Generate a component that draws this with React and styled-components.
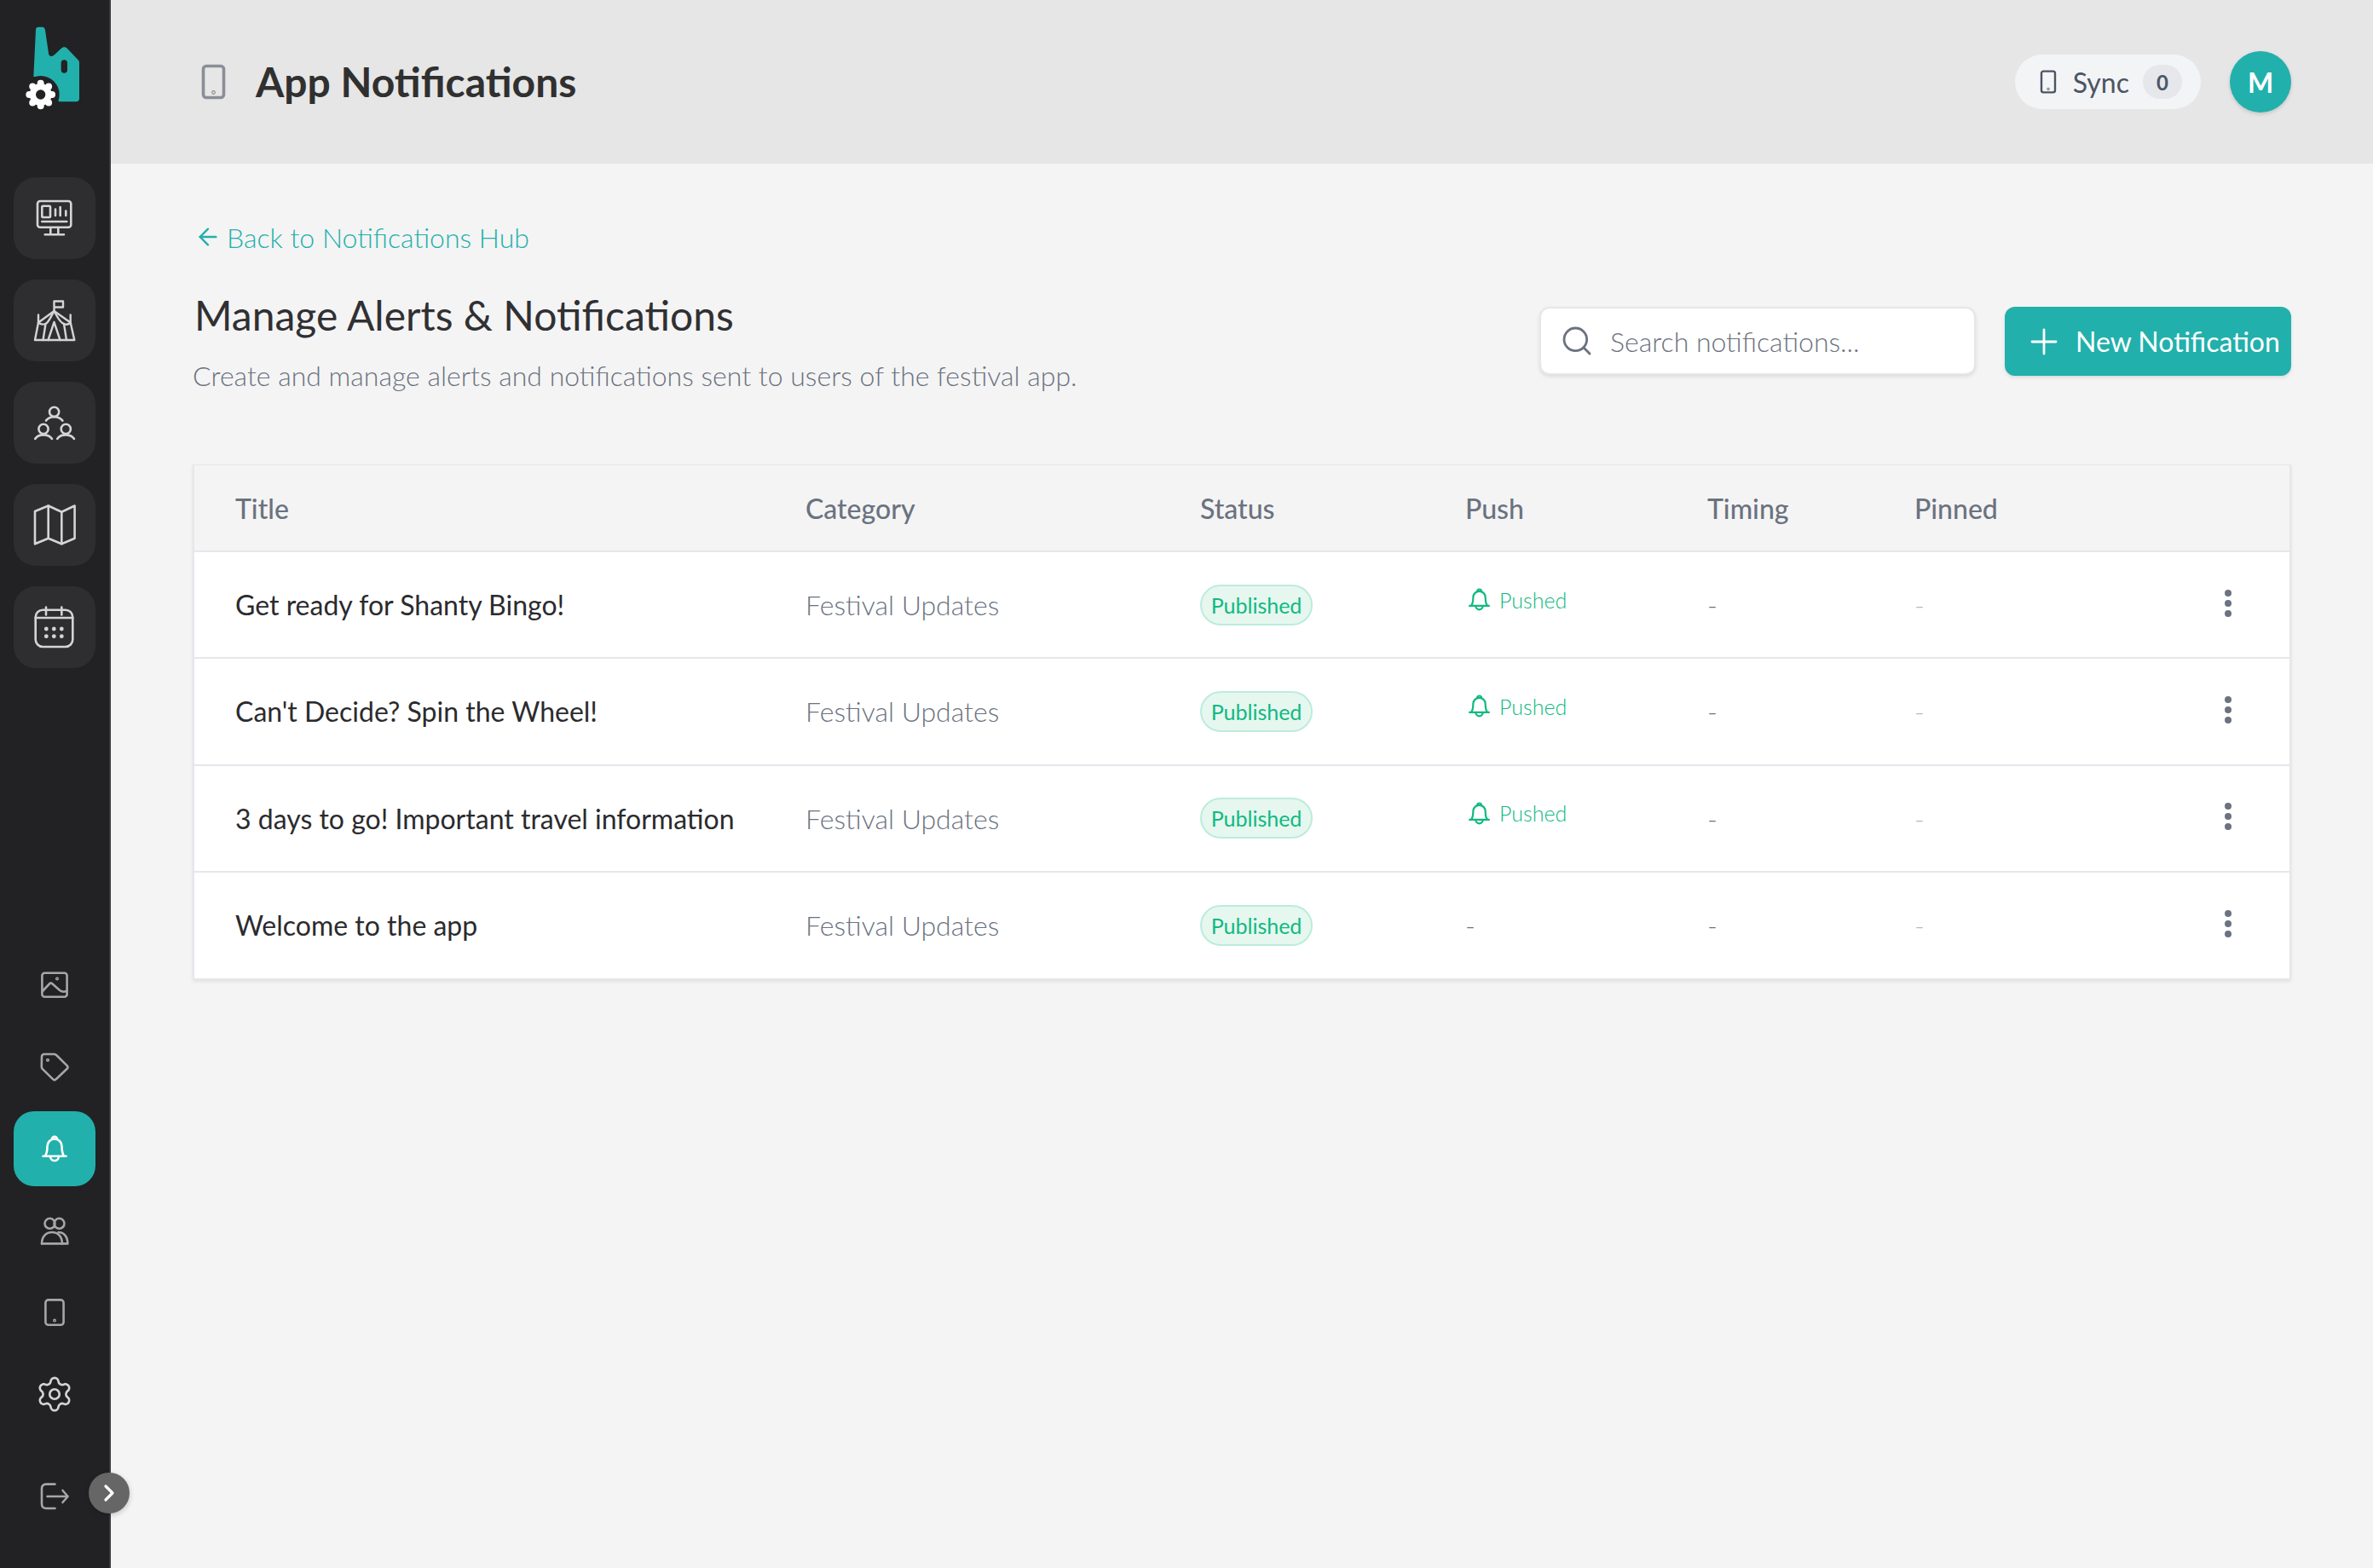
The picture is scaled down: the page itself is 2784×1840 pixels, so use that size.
import React from "react";
import styled, { createGlobalStyle } from "styled-components";
import { ArrowLeft, ChevronRight, Plus, Search, Settings } from "lucide-react";

const TEAL = "#22b0ac";
const GREEN = "#10b981";
const ROW_COLUMNS = "669px 463px 311px 284px 243px 1fr 96px";

const GlobalStyle = createGlobalStyle`
  html, body {
    margin: 0;
    padding: 0;
    background: #f4f4f4;
  }
  * {
    box-sizing: border-box;
  }
  body {
    font-family: Lato, "Open Sans", sans-serif;
  }
`;

const Shell = styled.div`
  position: relative;
  display: flex;
  width: 2784px;
  height: 1840px;
  overflow: hidden;
`;

const Sidebar = styled.aside`
  position: relative;
  flex: 0 0 130px;
  display: flex;
  flex-direction: column;
  padding: 20px 16px 40px;
  background: #222224;
  border-right: 2px solid #38383c;
`;

const LogoBox = styled.div`
  margin: 0 0 68px 4px;
  height: 120px;
`;

const TopNav = styled.nav`
  display: flex;
  flex-direction: column;
  gap: 24px;
`;

const TopItem = styled.div`
  display: flex;
  align-items: center;
  justify-content: center;
  width: 96px;
  height: 96px;
  border-radius: 26px;
  background: #2e2e30;
  color: #d4d4d4;
`;

const BottomNav = styled.nav`
  margin-top: auto;
  display: flex;
  flex-direction: column;
  gap: 8px;
`;

const BottomItem = styled.div`
  display: flex;
  align-items: center;
  justify-content: center;
  width: 96px;
  height: 88px;
  border-radius: 24px;
  background: ${(p) => (p.$active ? TEAL : "transparent")};
  color: ${(p) => (p.$active ? "#ffffff" : p.$bright ? "#d4d4d4" : "#a6a6a6")};
`;

const LogoutItem = styled(BottomItem)`
  margin-top: 24px;
`;

const ExpandButton = styled.div`
  position: absolute;
  left: 104px;
  top: 1728px;
  display: flex;
  align-items: center;
  justify-content: center;
  width: 48px;
  height: 48px;
  border-radius: 50%;
  background: #666666;
  color: #ffffff;
  box-shadow: 0 2px 6px rgba(0, 0, 0, 0.2);
`;

const Main = styled.main`
  flex: 1;
  display: flex;
  flex-direction: column;
  min-width: 0;
`;

const TopBar = styled.header`
  flex: 0 0 192px;
  display: flex;
  align-items: center;
  justify-content: space-between;
  padding: 0 96px 0 98px;
  background: #e6e6e6;
`;

const TopBarTitle = styled.div`
  display: flex;
  align-items: center;
  gap: 24px;
  color: #8b8e98;
`;

const PageName = styled.h1`
  margin: 0;
  font-size: 48px;
  line-height: 60px;
  font-weight: 700;
  color: #303030;
`;

const TopBarRight = styled.div`
  display: flex;
  align-items: center;
  gap: 34px;
`;

const SyncPill = styled.div`
  display: flex;
  align-items: center;
  height: 64px;
  padding: 0 22px 0 24px;
  border-radius: 32px;
  background: #f3f4f6;
  color: #4b5563;
  font-size: 32px;
`;

const SyncLabel = styled.span`
  margin: 0 16px 0 12px;
`;

const SyncCount = styled.span`
  display: flex;
  align-items: center;
  justify-content: center;
  width: 46px;
  height: 40px;
  border-radius: 20px;
  background: #e5e7eb;
  font-size: 24px;
  font-weight: 700;
`;

const Avatar = styled.div`
  display: flex;
  align-items: center;
  justify-content: center;
  width: 72px;
  height: 72px;
  border-radius: 50%;
  background: ${TEAL};
  color: #ffffff;
  font-size: 32px;
  font-weight: 700;
  box-shadow: 0 2px 4px rgba(0, 0, 0, 0.15);
`;

const Content = styled.div`
  padding: 64px 96px 0 98px;
`;

const BackLink = styled.a`
  display: flex;
  align-items: center;
  gap: 6px;
  height: 44px;
  color: ${TEAL};
  font-size: 32px;
  font-weight: 300;
`;

const HeadingRow = styled.div`
  display: flex;
  justify-content: space-between;
  align-items: flex-start;
  margin-top: 40px;
`;

const PageHeading = styled.h2`
  margin: 0;
  font-size: 48px;
  line-height: 60px;
  font-weight: 400;
  color: #303033;
`;

const PageIntro = styled.p`
  margin: 19px 0 0 -2px;
  font-size: 32px;
  line-height: 44px;
  font-weight: 300;
  color: #6b7280;
`;

const Toolbar = styled.div`
  display: flex;
  gap: 34px;
  margin-top: 20px;
`;

const SearchBox = styled.label`
  display: flex;
  align-items: center;
  gap: 17px;
  width: 512px;
  height: 80px;
  padding: 0 22px;
  background: #ffffff;
  border: 2px solid #e5e7eb;
  border-radius: 12px;
  color: #6b7280;
  box-shadow: 0 2px 4px rgba(0, 0, 0, 0.1);
`;

const SearchInput = styled.input`
  flex: 1;
  min-width: 0;
  border: 0;
  outline: 0;
  background: transparent;
  font-family: inherit;
  font-size: 32px;
  font-weight: 300;

  &::placeholder {
    color: #6b7280;
    opacity: 1;
  }
`;

const NewButton = styled.button`
  display: flex;
  align-items: center;
  gap: 13px;
  width: 336px;
  height: 81px;
  padding: 0 0 0 22px;
  border: 0;
  border-radius: 12px;
  background: ${TEAL};
  color: #ffffff;
  font-family: inherit;
  font-size: 32px;
  font-weight: 400;
  box-shadow: 0 2px 4px rgba(0, 0, 0, 0.1);
`;

const TableCard = styled.section`
  margin: 82px 0 0 -2px;
  border: 2px solid #e5e7eb;
  border-top-width: 1px;
  background: #ffffff;
  box-shadow: 0 2px 4px rgba(0, 0, 0, 0.08);
`;

const HeaderRow = styled.div`
  display: grid;
  grid-template-columns: ${ROW_COLUMNS};
  align-items: center;
  height: 102px;
  background: #f4f4f4;
  border-bottom: 2px solid #e5e7eb;
`;

const HeaderCell = styled.div`
  padding-left: 48px;
  font-size: 32px;
  font-weight: 500;
  color: #6b7280;
`;

const Row = styled.div`
  display: grid;
  grid-template-columns: ${ROW_COLUMNS};
  align-items: center;
  height: 125.33px;
  border-bottom: 2px solid #e5e7eb;

  &:last-child {
    border-bottom: 0;
    height: 124px;
  }
`;

const TitleCell = styled.div`
  padding-left: 48px;
  font-size: 32px;
  font-weight: 400;
  color: #2b2b2e;
`;

const CategoryCell = styled.div`
  padding-left: 48px;
  font-size: 32px;
  font-weight: 300;
  color: #6b7280;
`;

const StatusCell = styled.div`
  padding-left: 48px;
`;

const StatusBadge = styled.span`
  display: inline-flex;
  align-items: center;
  justify-content: center;
  width: 132px;
  height: 48px;
  border: 2px solid #bcecdc;
  border-radius: 24px;
  background: #e6f7f0;
  color: ${GREEN};
  font-size: 25px;
`;

const PushCell = styled.div`
  display: flex;
  align-items: center;
  gap: 10px;
  margin-top: -12px;
  padding-left: 51px;
  color: ${GREEN};
  font-size: 25px;
  font-weight: 300;
`;

const DashCell = styled.div`
  padding-left: ${(p) => p.$inset || 48}px;
  font-size: 32px;
  font-weight: 300;
  color: ${(p) => (p.$faint ? "#b9b9b9" : "#6b7280")};
`;

const ActionCell = styled.div`
  display: flex;
  flex-direction: column;
  align-items: flex-start;
  gap: 4px;
  margin-top: -4px;
  padding-left: 20px;
`;

const Dot = styled.span`
  width: 8px;
  height: 8px;
  border-radius: 50%;
  background: #6b7280;
`;

const BellGlyph = ({ size = 32 }) => (
  <svg width={size} height={size} viewBox="0 0 32 32" fill="none" stroke="currentColor" strokeWidth="2.6" strokeLinecap="round" strokeLinejoin="round" style={{ overflow: "visible" }}>
    <path d="M2.5 24.8H29.5" />
    <path d="M5 24.5C7 21.5 7.5 18.5 7.5 13A8.5 8.5 0 0 1 24.5 13C24.5 18.5 25 21.5 27 24.5" />
    <path d="M13 4.8A3 3 0 0 1 19 4.8" />
    <path d="M11 25A5 5 0 0 0 21 25" />
  </svg>
);

const Logo = () => (
  <svg width="90" height="120" viewBox="0 0 270 360">
    <path
      fill={TEAL}
      d="M76 35H88C95 35 98 40 99 46L111 128C113 140 122 140 130 134L155 111C162 104 170 104 177 111L214 150C217 153 219 156 219 160V288C219 294 214 298 208 298H152C147 298 144 295 144 290C144 262 134 218 100 213L58 210L66 44C66 38 70 35 76 35Z"
    />
    <rect x="155" y="151" width="22" height="46" rx="11" fill="#222224" />
    <circle cx="83" cy="273" r="66" fill="#222224" />
    <g fill="#ffffff">
      <circle cx="83" cy="273" r="39" />
      {[0, 45, 90, 135, 180, 225, 270, 315].map((a) => (
        <circle key={a} cx={83 + 40 * Math.cos((a * Math.PI) / 180)} cy={273 + 40 * Math.sin((a * Math.PI) / 180)} r="12" />
      ))}
    </g>
    <circle cx="83" cy="273" r="17" fill="#222224" />
  </svg>
);

const strokeProps = {
  fill: "none",
  stroke: "currentColor",
  strokeLinecap: "round",
  strokeLinejoin: "round",
  style: { overflow: "visible" },
};

const MonitorIcon = () => (
  <svg width="48" height="48" viewBox="0 0 48 48" strokeWidth="2.6" {...strokeProps}>
    <rect x="4" y="4" width="39.3" height="30.7" rx="3" />
    <rect x="9.3" y="9.7" width="9.7" height="13.3" rx="1" />
    <path d="M25 13.5V21M30.7 11V21M37.3 15.5V21M9.3 28H38.3M19.3 35V43M28.3 35V43M12.7 43.3H35" />
  </svg>
);

const TentIcon = () => (
  <svg width="48" height="48" viewBox="0 0 48 48" strokeWidth="2.4" {...strokeProps}>
    <path d="M23.5 13V1.5H34V8.5H23.5" />
    <path d="M5 17.5V26.5L23.5 13L42.7 26.5V17.5" />
    <path d="M5 26.5L1 47H47.3L42.7 26.5" />
    <path d="M5 26.5C8 29 11 29 13.5 28C17 26.5 20 19 23.5 13C27 19 30 26.5 35 28C37 29 40 29 42.7 26.5" />
    <path d="M13.5 28L10.5 47M35 28L38 47M23.5 26L16.5 47M23.5 26L30.5 47" />
  </svg>
);

const PeopleIcon = () => (
  <svg width="48" height="48" viewBox="0 0 48 48" strokeWidth="2.6" {...strokeProps}>
    <circle cx="23.6" cy="11.3" r="5.6" />
    <path d="M14 21.6C18 15.8 29 15.8 33.4 21.6" />
    <circle cx="11" cy="31.4" r="5.6" />
    <path d="M1.2 43C5 36.8 17 36.8 21 43" />
    <circle cx="37.3" cy="31.4" r="5.6" />
    <path d="M27.2 43C31 36.8 43 36.8 47 43" />
  </svg>
);

const MapIcon = () => (
  <svg width="48" height="48" viewBox="0 0 48 48" strokeWidth="2.6" {...strokeProps}>
    <path d="M1 8L16.7 1.5L32.3 8.7L47.6 1.5V39.7L32.3 46.3L16.7 39.7L1 46.3Z" />
    <path d="M16.7 1.5V39.7M32.3 8.7V46.3" />
  </svg>
);

const CalendarIcon = () => (
  <svg width="48" height="48" viewBox="0 0 48 48" strokeWidth="2.6" {...strokeProps}>
    <rect x="1.7" y="3.7" width="43.6" height="43.3" rx="8.5" />
    <path d="M14 0.5V9.5M32.3 0.5V9.5M1.7 13H45.3" />
    <g fill="currentColor" stroke="none">
      {[14.3, 23.3, 32.3].map((x) => (
        <React.Fragment key={x}>
          <circle cx={x} cy="26" r="2.4" />
          <circle cx={x} cy="34.7" r="2.4" />
        </React.Fragment>
      ))}
    </g>
  </svg>
);

const ImageIcon = () => (
  <svg width="32" height="32" viewBox="0 0 32 32" strokeWidth="2.6" {...strokeProps}>
    <rect x="1.4" y="1.8" width="29.2" height="28" rx="3" />
    <path d="M2 23L10 14.5C11 13.5 12.3 13.5 13.5 14.5L22 22C24 23.6 26 24.6 30 23" />
    <circle cx="19" cy="8.5" r="0.7" />
  </svg>
);

const TagIcon = () => (
  <svg width="32" height="32" viewBox="0 0 32 32" strokeWidth="2.6" {...strokeProps}>
    <path d="M3.8 1H15C16 1 17 1.2 18 2L30.8 14.6C31.8 15.6 31.8 17.2 30.8 18L18 30.2C16.8 31.4 15 31.4 13.8 30.2L1.8 18.4C1 17.6 0.8 16.6 0.8 15.6L1 3.8C1 2.2 2.2 1 3.8 1Z" />
    <circle cx="8" cy="8" r="0.8" />
  </svg>
);

const UsersIcon = () => (
  <svg width="32" height="32" viewBox="0 0 32 32" strokeWidth="2.6" {...strokeProps}>
    <circle cx="10.5" cy="7.8" r="6" />
    <circle cx="21.5" cy="7.8" r="6" />
    <path d="M1 31.4H31.4C31.4 23 27 18 20.5 18" />
    <path d="M1 31.4C1 23 6 18 13 18C20 18 25 23 25 31.4" />
  </svg>
);

const TabletIcon = () => (
  <svg width="32" height="32" viewBox="0 0 32 32" strokeWidth="2.6" {...strokeProps}>
    <rect x="5.4" y="1.4" width="21.2" height="29.4" rx="3.4" />
    <circle cx="16" cy="25.6" r="0.7" />
  </svg>
);

const LogoutIcon = () => (
  <svg width="32" height="32" viewBox="0 0 32 32" strokeWidth="2.6" {...strokeProps}>
    <path d="M16.5 1.6H6C3 1.6 1 3.6 1 6.6V25C1 28 3 30 6 30H16.5" />
    <path d="M7.5 16H31.6M25.5 9L31.6 16L25.5 23" />
  </svg>
);

const PhoneOutline = ({ size = 48, stroke = 3.6 }) => (
  <svg width={size} height={size} viewBox="0 0 48 48" {...strokeProps} strokeWidth={stroke}>
    <rect x="10.5" y="5.5" width="24" height="37" rx="3.5" />
    <circle cx="22.5" cy="36.5" r="0.6" />
  </svg>
);

const notifications = [
  { title: "Get ready for Shanty Bingo!", pushed: true },
  { title: "Can't Decide? Spin the Wheel!", pushed: true },
  { title: "3 days to go! Important travel information", pushed: true },
  { title: "Welcome to the app", pushed: false },
];

const columns = ["Title", "Category", "Status", "Push", "Timing", "Pinned", ""];

export default function App() {
  return (
    <Shell>
      <GlobalStyle />
      <Sidebar>
        <LogoBox>
          <Logo />
        </LogoBox>
        <TopNav>
          <TopItem><MonitorIcon /></TopItem>
          <TopItem><TentIcon /></TopItem>
          <TopItem><PeopleIcon /></TopItem>
          <TopItem><MapIcon /></TopItem>
          <TopItem><CalendarIcon /></TopItem>
        </TopNav>
        <BottomNav>
          <BottomItem><ImageIcon /></BottomItem>
          <BottomItem><TagIcon /></BottomItem>
          <BottomItem $active><BellGlyph /></BottomItem>
          <BottomItem><UsersIcon /></BottomItem>
          <BottomItem><TabletIcon /></BottomItem>
          <BottomItem $bright><Settings size={46} strokeWidth={1.4} /></BottomItem>
          <LogoutItem><LogoutIcon /></LogoutItem>
        </BottomNav>
      </Sidebar>
      <ExpandButton>
        <ChevronRight size={32} strokeWidth={2.4} />
      </ExpandButton>
      <Main>
        <TopBar>
          <TopBarTitle>
            <PhoneOutline />
            <PageName>App Notifications</PageName>
          </TopBarTitle>
          <TopBarRight>
            <SyncPill>
              <PhoneOutline size={32} stroke={3.6} />
              <SyncLabel>Sync</SyncLabel>
              <SyncCount>0</SyncCount>
            </SyncPill>
            <Avatar>M</Avatar>
          </TopBarRight>
        </TopBar>
        <Content>
          <BackLink>
            <ArrowLeft size={32} strokeWidth={1.8} />
            Back to Notifications Hub
          </BackLink>
          <HeadingRow>
            <div>
              <PageHeading>Manage Alerts &amp; Notifications</PageHeading>
              <PageIntro>Create and manage alerts and notifications sent to users of the festival app.</PageIntro>
            </div>
            <Toolbar>
              <SearchBox>
                <Search size={40} strokeWidth={1.7} />
                <SearchInput placeholder="Search notifications..." />
              </SearchBox>
              <NewButton>
                <Plus size={48} strokeWidth={1.4} />
                New Notification
              </NewButton>
            </Toolbar>
          </HeadingRow>
          <TableCard>
            <HeaderRow>
              {columns.map((c) => (
                <HeaderCell key={c}>{c}</HeaderCell>
              ))}
            </HeaderRow>
            {notifications.map((n) => (
              <Row key={n.title}>
                <TitleCell>{n.title}</TitleCell>
                <CategoryCell>Festival Updates</CategoryCell>
                <StatusCell>
                  <StatusBadge>Published</StatusBadge>
                </StatusCell>
                {n.pushed ? (
                  <PushCell>
                    <BellGlyph size={27} />
                    Pushed
                  </PushCell>
                ) : (
                  <DashCell>-</DashCell>
                )}
                <DashCell>-</DashCell>
                <DashCell $faint>-</DashCell>
                <ActionCell>
                  <Dot />
                  <Dot />
                  <Dot />
                </ActionCell>
              </Row>
            ))}
          </TableCard>
        </Content>
      </Main>
    </Shell>
  );
}
